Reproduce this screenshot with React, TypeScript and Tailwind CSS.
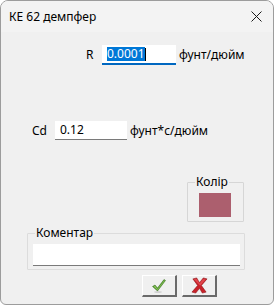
import React from 'react';

const font = { fontFamily: '"Segoe UI", "Noto Sans", "Open Sans", sans-serif' };

function CheckIcon() {
  return (
    <svg width="16" height="15" viewBox="0 0 16 15">
      <path d="M1.5 8.5 L4 7 L6.5 10 L13 1.5 L14.5 2.5 L6.5 13 Z" fill="#4f8f2c" stroke="#356f1c" strokeWidth="0.5" />
      <path d="M2.5 8.5 L4 7.8 L6.5 11 L13.3 2.3 L13.8 2.7 L6.5 12 Z" fill="#8cc85a" />
      <ellipse cx="7" cy="14" rx="4" ry="0.8" fill="#c8c8c8" />
    </svg>
  );
}

function CrossIcon() {
  return (
    <svg width="19" height="17" viewBox="0 0 20 18">
      <path d="M3 2 L7 1 L10 6 L14 1 L18 2 L12 9 L17 16 L13 17 L10 12 L6 17 L2 16 L8 9 Z" fill="#c8222a" stroke="#8e1016" strokeWidth="0.6" />
      <path d="M4 2.5 L7 2 L10 7 L14 2 L16.5 2.6 L11 9 L10 8.5 Z" fill="#e2474d" />
    </svg>
  );
}

export default function App() {
  return (
    <div style={font} className="w-[274px] h-[305px] bg-[#f0f0f0] border border-[#9c9c9c] rounded-t-[8px] rounded-b-[6px] overflow-hidden text-[12px] text-black flex flex-col">
      <div className="h-[31px] bg-[#f3f3f3] flex items-center justify-between pl-[8px] pr-[11px] shrink-0">
        <span className="text-[12px]">КЕ 62 демпфер</span>
        <svg width="11" height="11" viewBox="0 0 11 11">
          <path d="M0.5 0.5 L10.5 10.5 M10.5 0.5 L0.5 10.5" stroke="#1a1a1a" strokeWidth="1" />
        </svg>
      </div>

      <div className="flex items-center mt-[13px] h-[20px]">
        <span className="ml-[85px] w-[16px]">R</span>
        <div className="w-[74px] h-[20px] bg-white border-b-2 border-[#0067c0] flex items-center pl-[5px]">
          <span className="bg-[#0078d7] text-white leading-[14px]">0.0001</span>
          <span className="w-[1px] h-[13px] bg-black"></span>
        </div>
        <span className="ml-[3px]">фунт/дюйм</span>
      </div>

      <div className="flex items-center mt-[56px] h-[19px]">
        <span className="ml-[31px] w-[23px]">Cd</span>
        <div className="w-[72px] h-[19px] bg-white border-b border-[#7a7a7a] flex items-center pl-[5px]">0.12</div>
        <span className="ml-[3px]">фунт*с/дюйм</span>
      </div>

      <div className="flex justify-end pr-[29px] mt-[42px]">
        <div className="relative w-[57px] h-[40px] border border-[#d6d6d6] rounded-[1px]">
          <span className="absolute -top-[9px] left-[7px] bg-[#f0f0f0] px-[1px] text-[12px] leading-[16px]">Колір</span>
          <div className="mt-[10px] ml-[11px] w-[32px] h-[24px] bg-[#ac5f6e]"></div>
        </div>
      </div>

      <div className="relative ml-[26px] mt-[11px] w-[218px] h-[37px] border border-[#dcdcdc] rounded-[1px]">
        <span className="absolute -top-[9px] left-[7px] bg-[#f0f0f0] px-[1px] leading-[16px]">Коментар</span>
        <div className="mt-[10px] ml-[5px] w-[207px] h-[22px] bg-white border-b border-[#7a7a7a]"></div>
      </div>

      <div className="flex gap-[5px] ml-[141px] mt-[5px]">
        <button className="w-[35px] h-[22px] bg-[#f0f0f0] border-t border-l border-t-white border-l-white border-r-2 border-b-2 border-r-[#6a6a6a] border-b-[#6a6a6a] flex items-center justify-center">
          <CheckIcon />
        </button>
        <button className="w-[35px] h-[22px] bg-[#f0f0f0] border-t border-l border-t-white border-l-white border-r-2 border-b-2 border-r-[#6a6a6a] border-b-[#6a6a6a] flex items-center justify-center">
          <CrossIcon />
        </button>
      </div>
    </div>
  );
}
